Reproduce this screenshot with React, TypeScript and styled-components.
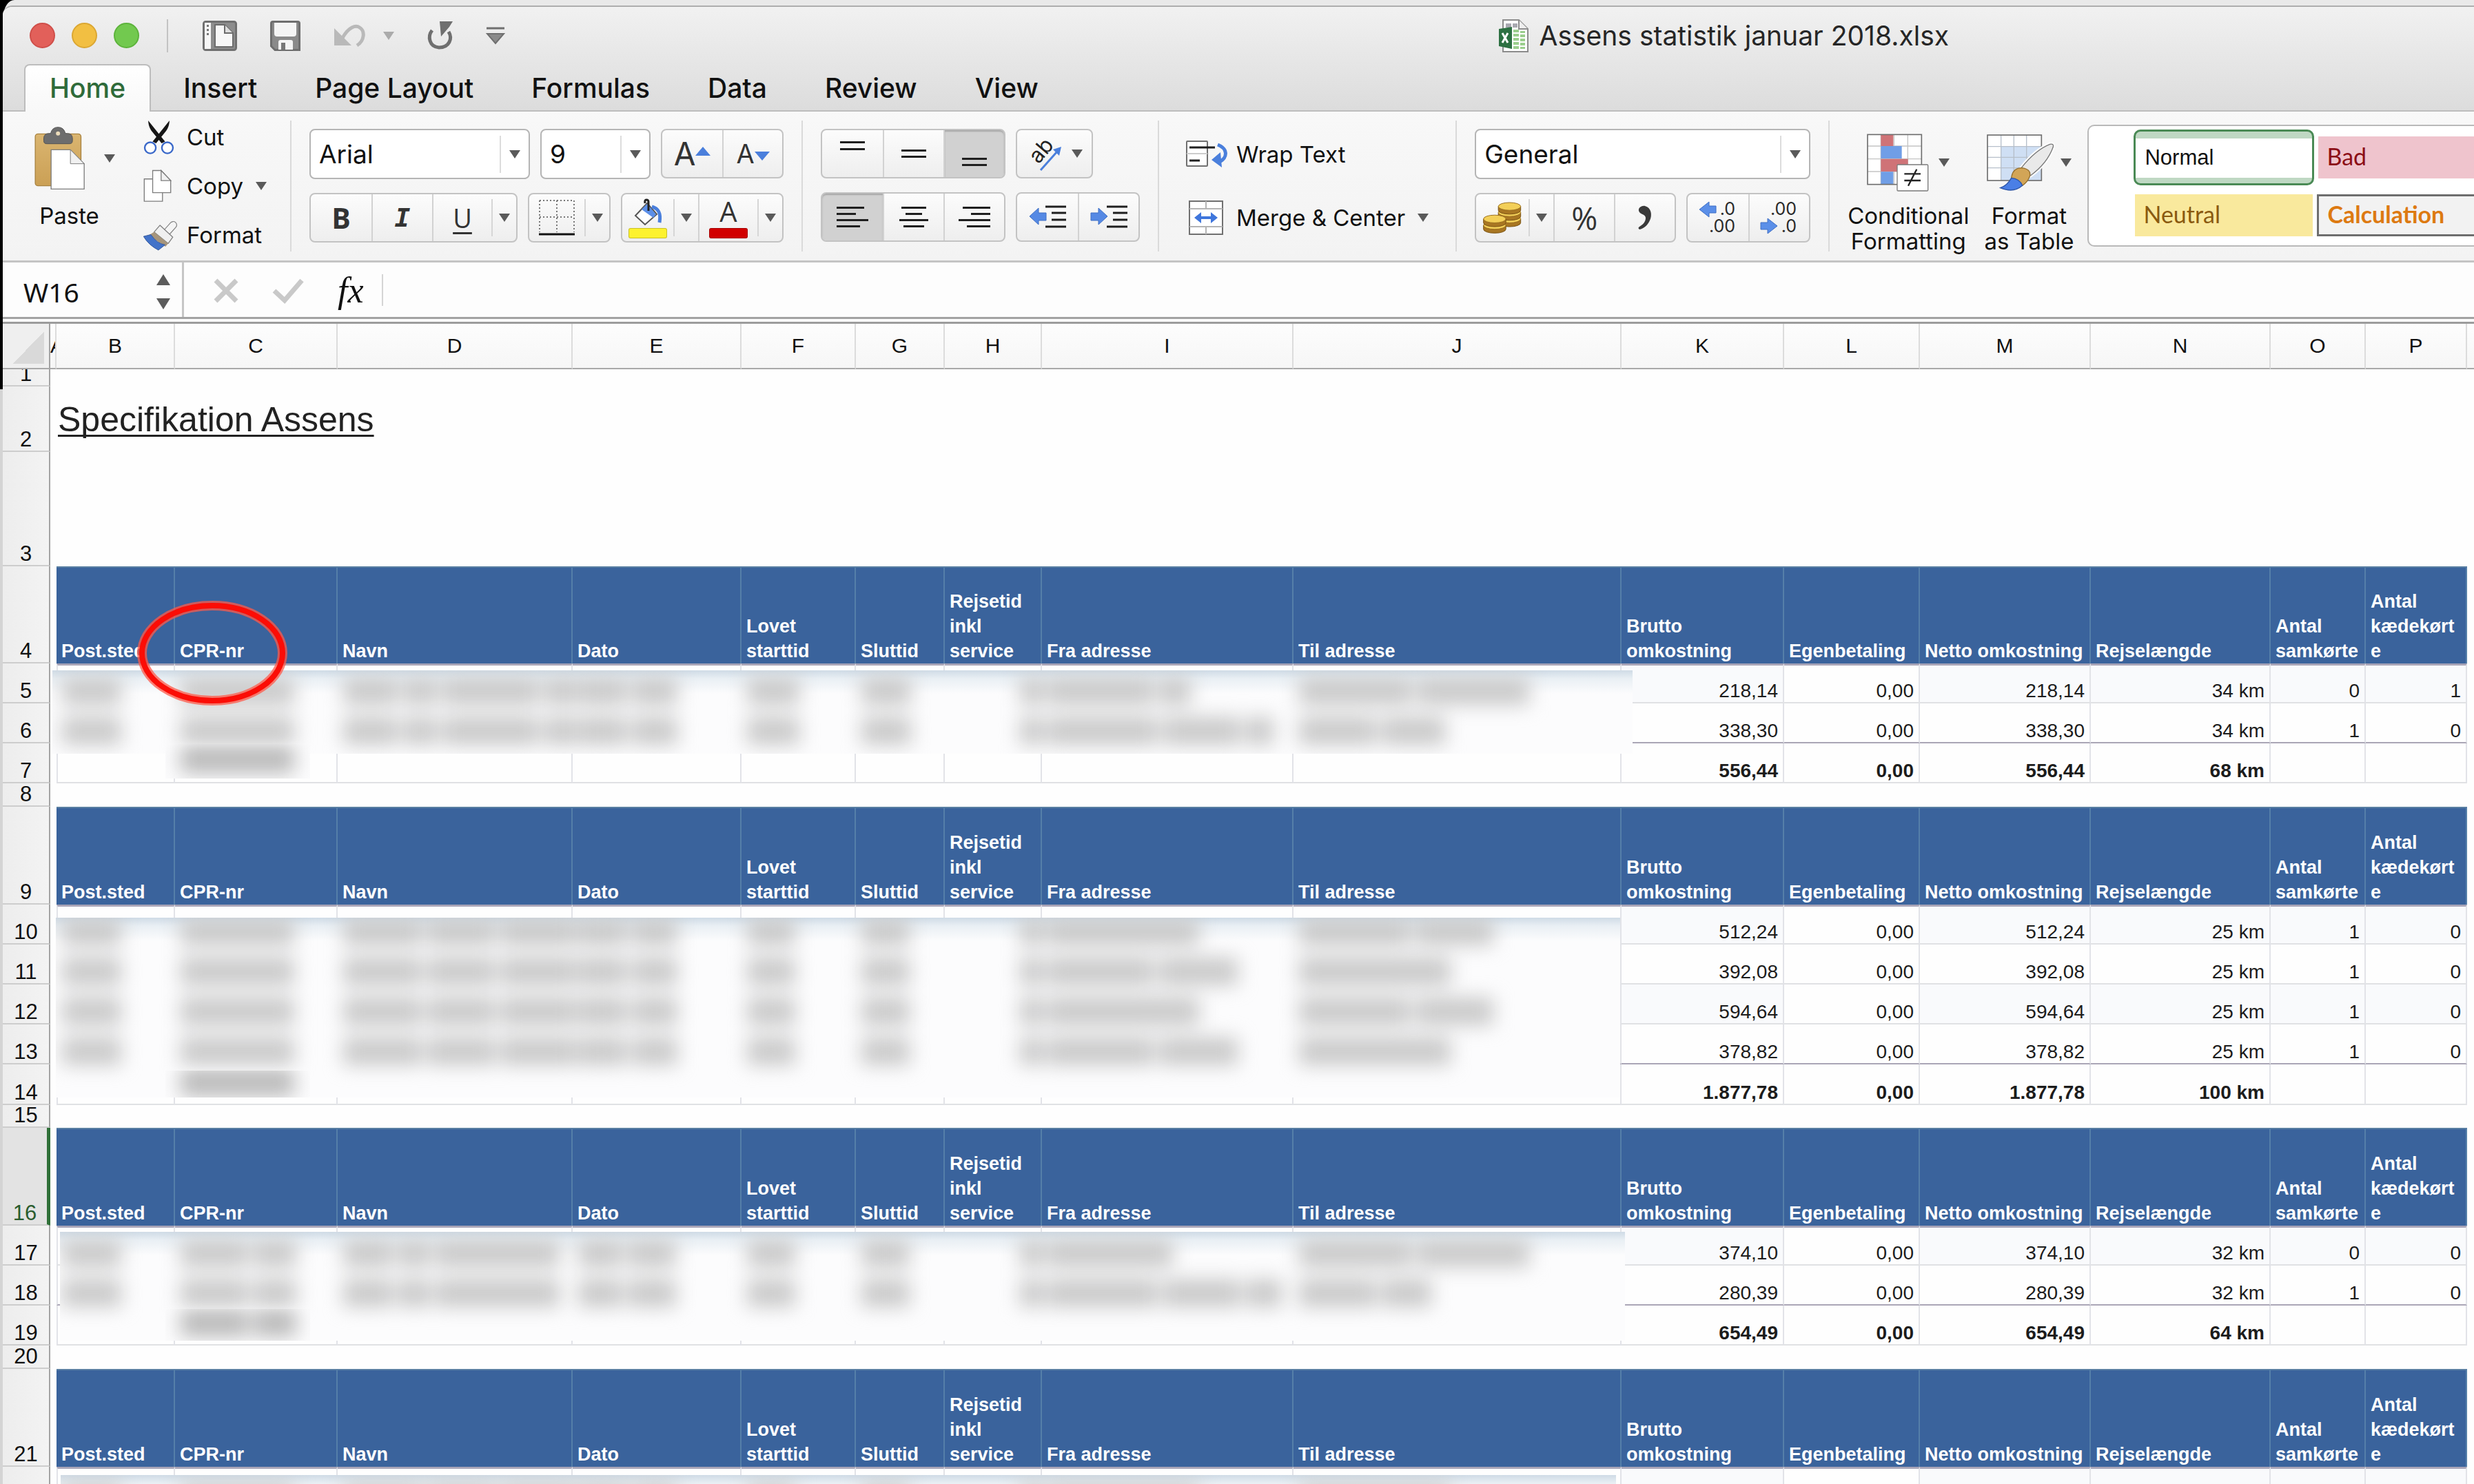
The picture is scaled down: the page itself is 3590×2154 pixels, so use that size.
import React from "react";
import styled, { createGlobalStyle, css } from "styled-components";

const UI = `Inter, "Liberation Sans", sans-serif`;
const SHEET = `"Liberation Sans", Arial, sans-serif`;
const CALIBRI = `Lato, "Open Sans", sans-serif`;
const HUMANIST = `"Open Sans", sans-serif`;

const GlobalStyle = createGlobalStyle`
  *, *::before, *::after { box-sizing: border-box; }
  html, body { margin: 0; padding: 0; }
  body { font-family: ${UI}; color: #111; }
  button, input, select { font: inherit; color: inherit; margin: 0; }
  svg { flex: none; overflow: visible; }
`;

/* ---------- window frame ---------- */

const Desktop = styled.div`
  height: 100vh;
  overflow: hidden;
  padding: 8px 0 0 4px;
  background: linear-gradient(#000 565px, #d4d4d4 565px);
  display: flex;
  flex-direction: column;
  position: relative;
  &::before {
    content: "";
    position: absolute;
    inset: 0 0 auto 5px;
    height: 40px;
    border-top-left-radius: 16px 24px;
    background: #e9e9e9;
  }
`;

const Window = styled.main`
  flex: 1;
  min-height: 0;
  display: flex;
  flex-direction: column;
  position: relative;
  background: #fdfdfd;
  border-top: 2px solid #aeaeae;
  border-top-left-radius: 14px;
  overflow: hidden;
`;

const Chrome = styled.header`
  background: linear-gradient(#f1f1f1, #dcdcdc);
  border-bottom: 2px solid #bdbdbd;
`;

const TitleBar = styled.div`
  display: flex;
  align-items: center;
  height: 83px;
`;

const TitleTools = styled.div`
  flex: 0 0 60.5%;
  display: flex;
  align-items: center;
  padding-left: 39px;
`;

const Lights = styled.div`
  display: flex;
  gap: 24px;
  padding-right: 40px;
  border-right: 2px solid #c3c3c3;
  height: 48px;
  align-items: center;
`;

const Light = styled.button<{ $fill: string; $edge: string }>`
  width: 37px;
  height: 37px;
  padding: 0;
  border-radius: 50%;
  border: 2px solid ${(p) => p.$edge};
  background: ${(p) => p.$fill};
`;

const BareButton = styled.button`
  display: flex;
  align-items: center;
  padding: 0;
  border: 0;
  background: none;
`;

const QuickTools = styled.div`
  display: flex;
  align-items: center;
  padding-left: 50px;
  gap: 48px;
`;

const DocTitle = styled.h1`
  display: flex;
  align-items: center;
  gap: 16px;
  margin: 0;
  font-size: 39px;
  font-weight: 400;
  color: #262626;
  white-space: nowrap;
`;

const Tabs = styled.nav`
  display: flex;
  gap: 10px;
  padding-left: 31px;
  height: 67px;
`;

const Tab = styled.button<{ $active?: boolean }>`
  padding: 0 35px;
  font-size: 39px;
  line-height: 60px;
  font-weight: 500;
  border: 2px solid transparent;
  border-bottom: 0;
  background: none;
  white-space: nowrap;
  ${(p) =>
    p.$active &&
    css`
      color: #2f6b3a;
      height: 69px;
      padding-bottom: 2px;
      background: linear-gradient(#fff, #f8f8f8);
      border-color: #bdbdbd;
      border-radius: 8px 8px 0 0;
    `}
`;

/* ---------- ribbon ---------- */

const Ribbon = styled.section`
  display: flex;
  padding: 13px 0;
  background: linear-gradient(#f8f8f8, #f3f3f3);
  border-bottom: 3px solid #c4c4c4;
  font-size: 33px;
`;

const RibbonGroup = styled.div<{ $pad?: number; $grow?: boolean }>`
  display: flex;
  flex: ${(p) => (p.$grow ? "1 0 0" : "none")};
  min-width: 0;
  height: 190px;
  padding: ${(p) => (p.$grow ? "0 0 0 26px" : `12px ${p.$pad ?? 26}px`)};
  border-right: ${(p) => (p.$grow ? "0" : "2px solid #dadada")};
`;

const Stack = styled.div<{ $gap: number }>`
  display: flex;
  flex-direction: column;
  gap: ${(p) => p.$gap}px;
`;

const Row = styled.div`
  display: flex;
  gap: 15px;
`;

const PasteButton = styled.button`
  display: flex;
  flex-direction: column;
  align-items: center;
  justify-content: space-between;
  height: 150px;
  padding: 0;
  margin: -5px 40px 0 0;
  border: 0;
  background: none;
  line-height: 38px;
`;

const PasteLabel = styled.span`
  padding-right: 14px;
`;

const WithArrow = styled.span<{ $gap: number }>`
  display: flex;
  align-items: center;
  gap: ${(p) => p.$gap}px;
`;

const ClipList = styled.div`
  display: flex;
  flex-direction: column;
  width: 170px;
  margin: -15px 0;
`;

const LabelButton = styled.button<{ $slot: number; $height: number }>`
  display: grid;
  grid-template-columns: ${(p) => p.$slot}px auto auto;
  justify-content: start;
  align-items: center;
  height: ${(p) => p.$height}px;
  padding: 0;
  border: 0;
  background: none;
  white-space: nowrap;
  line-height: 36px;
  & > :nth-child(3) { margin-left: 18px; }
`;

const Combo = styled.div<{ $width: number }>`
  display: flex;
  align-items: center;
  width: ${(p) => p.$width}px;
  height: 73px;
  border: 2px solid #b5b5b5;
  border-radius: 8px;
  background: #fff;
  select {
    flex: 1;
    min-width: 0;
    height: 100%;
    padding: 0 0 0 12px;
    border: 0;
    background: none;
    appearance: none;
    font-size: 37px;
  }
`;

const ArrowSlot = styled.span`
  display: flex;
  align-items: center;
  justify-content: center;
  width: 42px;
  height: 54px;
  border-left: 2px solid #dcdcdc;
`;

const Segments = styled.div`
  display: flex;
  height: 72px;
  border: 2px solid #c3c3c3;
  border-radius: 8px;
  background: linear-gradient(#fcfcfc, #eee);
  & > button + button:not([data-drop]) { border-left: 2px solid #d2d2d2; }
`;

const Segment = styled.button<{ $width?: number; $pressed?: boolean }>`
  display: flex;
  align-items: center;
  justify-content: center;
  width: ${(p) => p.$width ?? 88}px;
  padding: 0;
  border: 0;
  color: #333;
  background: ${(p) => (p.$pressed ? "#d1d1d1" : "none")};
  box-shadow: ${(p) => (p.$pressed ? "inset 0 2px 2px #a6a6a6" : "none")};
  &:first-child { border-radius: 6px 0 0 6px; }
  &:last-child { border-radius: 0 6px 6px 0; }
`;

const DropSegment = styled.button`
  align-self: center;
  display: flex;
  align-items: center;
  justify-content: center;
  width: 36px;
  height: 54px;
  padding: 0;
  border: 0;
  border-left: 2px solid #d6d6d6;
  background: none;
`;

const Glyph = styled.span<{ $font?: string; $size?: number; $bold?: boolean; $italic?: boolean; $line?: boolean; $tight?: boolean }>`
  font-family: ${(p) => p.$font ?? UI};
  font-size: ${(p) => p.$size ?? 38}px;
  line-height: ${(p) => (p.$tight ? 40 : 46)}px;
  font-weight: ${(p) => (p.$bold ? 700 : 400)};
  font-style: ${(p) => (p.$italic ? "italic" : "normal")};
  text-decoration: ${(p) => (p.$line ? "underline" : "none")};
  text-decoration-thickness: 3px;
  text-underline-offset: 6px;
`;

const Swatch = styled.span<{ $color: string }>`
  display: grid;
  justify-items: center;
  align-content: end;
  gap: 4px;
  height: 60px;
  &::after {
    content: "";
    width: 56px;
    height: 15px;
    border-radius: 3px;
    background: ${(p) => p.$color};
    box-shadow: inset 0 0 0 1px rgba(0, 0, 0, 0.2);
  }
`;

const BigButton = styled.button`
  display: flex;
  flex-direction: column;
  align-items: center;
  justify-content: flex-end;
  height: 194px;
  padding: 0;
  margin-right: 22px;
  border: 0;
  background: none;
  line-height: 37px;
  white-space: pre-line;
  & > :first-child { margin-bottom: 17px; }
`;

const StyleGallery = styled.div`
  flex: 1;
  min-width: 0;
  display: grid;
  grid-template-columns: 262px 300px;
  grid-template-rows: 81px 61px;
  gap: 13px 4px;
  align-items: center;
  height: 177px;
  margin: 6px 0 0 -2px;
  padding: 5px 0 0 65px;
  border: 2px solid #b9b9b9;
  border-right: 0;
  border-radius: 10px 0 0 10px;
  background: #fff;
  overflow: hidden;
`;

const CellStyle = styled.button<{ $bg: string; $ink: string; $bold?: boolean; $boxed?: boolean }>`
  height: 61px;
  margin: 0 ${(p) => (p.$boxed ? 0 : 2)}px 0 ${(p) => (p.$boxed ? 0 : 2)}px;
  padding: 0 0 4px 12px;
  text-align: left;
  font-family: ${CALIBRI};
  font-size: 34px;
  font-weight: ${(p) => (p.$bold ? 700 : 400)};
  color: ${(p) => p.$ink};
  background: ${(p) => p.$bg};
  border: ${(p) => (p.$boxed ? "3px solid #6e6e6e" : "0")};
`;

const SelectedStyle = styled.button`
  height: 81px;
  padding: 0 0 0 13px;
  text-align: left;
  font-family: ${SHEET};
  font-size: 31px;
  border: 3px solid #4a8a55;
  border-radius: 10px;
  background: linear-gradient(#bfd8c3 10px, #fff 10px, #fff 67px, #bfd8c3 67px);
`;

/* ---------- formula bar ---------- */

const FormulaBar = styled.section`
  display: flex;
  align-items: stretch;
  height: 82px;
  background: #fdfdfd;
  border-bottom: 3px solid #a3a3a3;
`;

const NameBox = styled.div`
  display: flex;
  align-items: center;
  width: 263px;
  padding: 6px 17px 0 30px;
  border-right: 3px solid #c6c6c6;
  input {
    flex: 1;
    min-width: 0;
    padding: 0;
    border: 0;
    background: none;
    font-family: "Noto Sans", sans-serif;
    font-size: 39px;
  }
`;

const FormulaTools = styled.div`
  display: flex;
  align-items: center;
  gap: 50px;
  padding: 2px 22px 0 43px;
  margin-right: 4px;
`;

const FormulaInput = styled.input`
  align-self: center;
  flex: 1;
  height: 46px;
  border: 0;
  border-left: 2px solid #d5d5d5;
  background: none;
  font-size: 36px;
`;

/* ---------- sheet ---------- */

const SheetArea = styled.section`
  flex: 1;
  min-height: 0;
  margin-top: 4px;
  border-top: 3px solid #9c9c9c;
  overflow: hidden;
  background: #fefefe;
`;

const Grid = styled.table`
  width: 100%;
  table-layout: fixed;
  border-collapse: separate;
  border-spacing: 0;
  font-family: ${SHEET};
  font-size: 28px;
  line-height: 32px;
  color: #1c1c1c;
  td, th { padding: 0; vertical-align: bottom; }
`;

const LetterRow = styled.thead`
  position: relative;
  z-index: 4;
`;

const Letter = styled.th<{ $narrow?: boolean }>`
  height: 66px;
  overflow: hidden;
  text-align: ${(p) => (p.$narrow ? "left" : "center")};
  font-weight: 400;
  font-size: 30px;
  line-height: 64px;
  color: #111;
  background: linear-gradient(#fdfdfd, #f6f6f6);
  border-right: 2px solid #dcdcdc;
  border-bottom: 2px solid #a9a9a9;
  &:last-child { border-right: 0; }
`;

const Corner = styled.td`
  background: linear-gradient(to bottom right, transparent 50%, #d9d9d9 50%) 14px 12px / 46px 46px no-repeat, #efefef;
  border-right: 2px solid #a3a3a3;
  border-bottom: 2px solid #a9a9a9;
`;

const RowNumber = styled.th<{ $active?: boolean }>`
  && { padding-bottom: 10px; }
  text-align: center;
  font-weight: 400;
  font-size: 31px;
  line-height: 12px;
  color: ${(p) => (p.$active ? "#2a5c2e" : "#111")};
  background: ${(p) =>
    p.$active ? "#e3e3e3" : "linear-gradient(to right, #ededed, #f3f3f3)"};
  border-right: ${(p) => (p.$active ? "5px solid #2f7038" : "2px solid #a3a3a3")};
  border-bottom: 2px solid #cdcdcd;
`;

const TitleCell = styled.td`
  && { padding: 0 0 19px 2px; }
  font-size: 50px;
  line-height: 56px;
  color: #222;
  text-decoration: underline;
  text-decoration-thickness: 3px;
  text-underline-offset: 5px;
  text-decoration-skip-ink: none;
`;

const HeadCell = styled.th`
  && { padding-left: 7px; }
  position: relative;
  text-align: left;
  white-space: pre;
  font-size: 27px;
  line-height: 36px;
  color: #fff;
  background: #3a639c;
  border-right: 2px solid #557fa9;
  border-top: 2px solid #5a7fa2;
`;

const DataCell = styled.td<{ $tint?: boolean; $first?: boolean; $last?: boolean; $total?: boolean; $edge?: boolean }>`
  && { padding-right: 7px; }
  position: relative;
  text-align: right;
  white-space: nowrap;
  font-weight: ${(p) => (p.$total ? 700 : 400)};
  background: ${(p) => (p.$tint ? "#f9fafc" : "transparent")};
  border-right: 2px solid #e2e3e8;
  border-left: ${(p) => (p.$edge ? "2px solid #e2e3e8" : "0")};
  border-top: ${(p) => (p.$first ? "3px solid #a9a5b8" : "0")};
  border-bottom: 2px solid ${(p) => (p.$last ? "#aaa6b6" : "#e0e1e4")};
`;

/* ---------- blurred personal data ---------- */

const Veil = styled.div<{ $x: number; $y: number; $w: number; $h: number }>`
  position: absolute;
  z-index: 2;
  left: ${(p) => p.$x}px;
  top: ${(p) => p.$y}px;
  width: ${(p) => p.$w}px;
  height: ${(p) => p.$h}px;
  display: flex;
  flex-direction: column;
  overflow: hidden;
  background: #fcfcfd;
`;

const VeilShade = styled.div`
  flex: none;
  height: 34px;
  margin-bottom: -34px;
  background: linear-gradient(#cfdbe6, #e9eff4 35%, rgba(252, 252, 253, 0));
`;

const SmudgeGrid = styled.div<{ $x: number; $y: number }>`
  flex: none;
  display: grid;
  grid-template-columns: 172px 236px 341px 245px 166px 129px 141px 365px 476px;
  grid-auto-rows: 58px;
  margin: ${(p) => p.$y}px 0 0 ${(p) => p.$x}px;
  filter: blur(14px);
`;

const SmudgeCell = styled.div<{ $end?: boolean }>`
  display: flex;
  align-items: center;
  justify-content: ${(p) => (p.$end ? "flex-end" : "flex-start")};
  gap: 8px;
  padding-left: ${(p) => (p.$end ? 0 : 6)}px;
`;

const Smudge = styled.span<{ $w: number; $dark?: boolean }>`
  flex: none;
  width: ${(p) => p.$w}px;
  height: 40px;
  background: ${(p) => (p.$dark ? "#b9b9b9" : "#c9c9c9")};
`;

const Ring = styled.svg`
  position: absolute;
  z-index: 3;
  left: -59px;
  top: 44px;
`;

/* ---------- drawings ---------- */

const Down = ({ light = false }: { light?: boolean }) => (
  <svg width="16" height="12" viewBox="0 0 16 12" aria-hidden="true">
    <path d="M0 0H16L8 12Z" fill={light ? "#ababab" : "#5a5a5a"} />
  </svg>
);

const SidebarIcon = () => (
  <svg width="50" height="44" viewBox="0 0 50 44">
    <rect x="1.5" y="1.5" width="47" height="41" rx="3" fill="#8d8d8d" stroke="#707070" strokeWidth="3" />
    <rect x="3" y="3" width="9" height="38" fill="#f7f7f7" />
    <path d="M7.500 6v3M7.500 12v3M7.500 18v3" stroke="#777" strokeWidth="3" />
    <path d="M18 6H32L44 18V38H18Z" fill="#f7f7f7" stroke="#6c6c6c" strokeWidth="2" />
    <path d="M32 6V18H44" fill="#ddd" stroke="#6c6c6c" strokeWidth="2" />
  </svg>
);

const SaveIcon = () => (
  <svg width="44" height="44" viewBox="0 0 44 44">
    <path d="M4 1.500H40Q42.500 1.500 42.500 4V42.500H7L1.500 37V4Q1.500 1.500 4 1.500Z" fill="#8a8a8a" stroke="#6e6e6e" strokeWidth="3" />
    <path d="M6 3H38V19Q38 23 34 23H10Q6 23 6 19Z" fill="#f4f4f4" />
    <path d="M12 42V31Q12 28 15 28H30Q33 28 33 31V42Z" fill="#f4f4f4" />
    <rect x="16" y="32" width="6" height="10" fill="#777" />
  </svg>
);

const UndoIcon = () => (
  <svg width="48" height="34" viewBox="0 0 48 34">
    <path d="M1 6V31H26Z" fill="#b9b9b9" />
    <path d="M13 20C22 4 32 1 38 5C46 10 45 24 34 31" fill="none" stroke="#b9b9b9" strokeWidth="5" />
  </svg>
);

const RepeatIcon = () => (
  <svg width="38" height="42" viewBox="0 0 38 42">
    <path d="M7 13C0 22 3 37 17 38C32 38 37 25 31 15" fill="none" stroke="#6f6f6f" strokeWidth="5" />
    <path d="M18 0H37L32 8L20 22Z" fill="#6f6f6f" />
  </svg>
);

const CustomizeIcon = () => (
  <svg width="26" height="26" viewBox="0 0 26 26">
    <path d="M0 2H26" stroke="#6f6f6f" strokeWidth="3" />
    <path d="M1 10H25L13 24Z" fill="#8a8a8a" stroke="#6f6f6f" strokeWidth="2" />
  </svg>
);

const ExcelIcon = () => (
  <svg width="44" height="48" viewBox="0 0 44 48">
    <path d="M7 1H30L43 14V47H7Z" fill="#fff" stroke="#8c8c8c" strokeWidth="2" />
    <path d="M30 1V14H43" fill="#eee" stroke="#8c8c8c" strokeWidth="2" />
    <path d="M11 6h8v6h-8zM21 6h7v6h-7z" fill="#a9a9b1" />
    <path d="M22 15h8v4h-8zM32 17h7v3h-7zM22 21h8v4h-8zM32 22h7v4h-7zM22 27h8v4h-8zM32 28h7v4h-7zM22 33h8v4h-8zM32 34h7v4h-7zM22 39h8v4h-8zM32 40h7v3h-7z" fill="#9bcf8d" />
    <path d="M1 14L20 11V43L1 39Z" fill="#2d7042" />
    <path d="M6 20L14 34M14 20L6 34" stroke="#fff" strokeWidth="3" />
  </svg>
);

const PasteIcon = () => (
  <svg width="77" height="95" viewBox="140 35 230 285">
    <defs>
      <linearGradient id="board" x1="0" x2="0" y1="0" y2="1">
        <stop offset="0" stopColor="#dab570" />
        <stop offset="1" stopColor="#cba055" />
      </linearGradient>
    </defs>
    <rect x="149" y="72" width="199" height="226" rx="12" fill="url(#board)" stroke="#a8823f" strokeWidth="4" />
    <path d="M186 102V92Q186 70 210 70H216Q222 43 248 43Q274 43 280 70H288Q311 70 311 92V102Q311 115 298 115H199Q186 115 186 102Z" fill="#6d6d6d" stroke="#555" strokeWidth="3" />
    <circle cx="248" cy="70" r="9" fill="#ecdcba" />
    <path d="M218 141H302L362 202V312H218Z" fill="#fff" stroke="#7d7d7d" strokeWidth="4" />
    <path d="M302 141V202H362Z" fill="#f1f1f1" stroke="#7d7d7d" strokeWidth="3" />
  </svg>
);

const CutIcon = () => (
  <svg width="47" height="52" viewBox="620 10 140 155">
    <path d="M644 16C645 38 652 54 662 65L702 114L717 107Z" fill="#161616" />
    <path d="M736 16C735 38 728 54 718 65L678 114L663 107Z" fill="#161616" />
    <circle cx="653" cy="134" r="24" fill="#fff" stroke="#3a68c9" strokeWidth="7" />
    <circle cx="727" cy="134" r="24" fill="#fff" stroke="#3a68c9" strokeWidth="7" />
  </svg>
);

const CopyIcon = () => (
  <svg width="43" height="50" viewBox="625 225 130 150">
    <path d="M632 269H712V367H632Z" fill="#fff" stroke="#7c7c7c" strokeWidth="4" />
    <path d="M669 232H706L748 276V329H669Z" fill="#fff" stroke="#7c7c7c" strokeWidth="4" />
    <path d="M706 232V276H748Z" fill="#f1f1f1" stroke="#7c7c7c" strokeWidth="4" />
  </svg>
);

const BrushIcon = () => (
  <svg width="53" height="47" viewBox="614 440 160 140">
    <path d="M748 465L722 494" stroke="#808080" strokeWidth="34" strokeLinecap="round" />
    <path d="M748 465L716 500" stroke="#f5f5f5" strokeWidth="27" strokeLinecap="round" />
    <path d="M690 466L746 518L726 546L664 496Z" fill="#f0f0f0" stroke="#808080" strokeWidth="4" strokeLinejoin="round" />
    <path d="M664 496L726 546L714 560L640 510Z" fill="#a6957c" />
    <path d="M618 515L650 507Q676 546 712 552L683 575Q640 553 618 515Z" fill="#4373c9" stroke="#34599c" strokeWidth="3" />
  </svg>
);

const BordersIcon = () => (
  <svg width="52" height="54" viewBox="0 0 52 54">
    <path d="M1 2H51M1 26H51M1 2V48M26 2V48M51 2V48" stroke="#777" strokeWidth="2" strokeDasharray="2 3" fill="none" />
    <path d="M0 51H52" stroke="#111" strokeWidth="3" />
  </svg>
);

const BucketIcon = () => (
  <svg width="42" height="38" viewBox="0 0 42 38">
    <path d="M3 24L20 6L34 22L17 37Z" fill="#fff" stroke="#555" strokeWidth="2" />
    <path d="M12 15L20 7L33 22L29 27Z" fill="#5c8fe8" />
    <path d="M27 11C38 14 40 22 38 34" fill="none" stroke="#4a7fdc" strokeWidth="5" />
    <path d="M22 17V4Q22 1 19 1Q16 1 17 6" fill="none" stroke="#222" strokeWidth="3" />
  </svg>
);

const Lines = ({ rows, width = 46, height = 38 }: { rows: number[][]; width?: number; height?: number }) => (
  <svg width={width} height={height} viewBox={`0 0 ${width} ${height}`}>
    {rows.map(([x, y, w]) => (
      <rect key={y} x={x} y={y} width={w} height="3" fill="#1f1f1f" />
    ))}
  </svg>
);

const OrientIcon = () => (
  <svg width="52" height="50" viewBox="0 0 52 50">
    <text x="18" y="41" transform="rotate(-50 18 41)" fontFamily="Inter, sans-serif" fontSize="31" fill="#222">ab</text>
    <path d="M21 49L45 22" stroke="#4a7fdc" strokeWidth="3" />
    <path d="M39 19L51 15L48 28Z" fill="#4a7fdc" />
  </svg>
);

const IndentIcon = ({ out = false }: { out?: boolean }) => (
  <svg width="54" height="34" viewBox="0 0 54 34">
    <path d={out ? "M1 16L14 4V11H25V22H14V28Z" : "M25 16L12 4V11H1V22H12V28Z"} fill="#5589e4" stroke="#3f6fc4" />
    <path d="M24 2H54M33 11H54M33 21H54M24 31H54" stroke="#1f1f1f" strokeWidth="3" />
  </svg>
);

const WrapIcon = () => (
  <svg width="62" height="40" viewBox="0 0 62 40">
    <rect x="1" y="1" width="30" height="36" rx="1" fill="#fff" stroke="#707070" strokeWidth="2" />
    <path d="M1 19H31" stroke="#ccc" strokeWidth="2" />
    <path d="M5 10H42M5 29H20" stroke="#1f1f1f" strokeWidth="3" />
    <path d="M46 6C61 12 60 24 50 30" fill="none" stroke="#4a7fdc" strokeWidth="5" />
    <path d="M37 28L50 17L52 39Z" fill="#4a7fdc" />
  </svg>
);

const MergeIcon = () => (
  <svg width="54" height="50" viewBox="-4 0 54 50">
    <rect x="1" y="1" width="48" height="48" fill="#fff" stroke="#707070" strokeWidth="2" />
    <path d="M1 12H49M1 38H49M25 1V12M25 38V49" stroke="#b5b5b5" strokeWidth="2" />
    <path d="M14 25H36" stroke="#3f76dc" strokeWidth="4" />
    <path d="M8 25L18 17V33ZM42 25L32 17V33Z" fill="#3f76dc" />
  </svg>
);

const Coin = ({ x, y }: { x: number; y: number }) => (
  <g>
    <path d={`M${x} ${y}V${y + 17}A49 17 0 0 0 ${x + 98} ${y + 17}V${y}Z`} fill="#a87622" stroke="#7b5413" strokeWidth="3" />
    <ellipse cx={x + 49} cy={y} rx="49" ry="17" fill="#f3cf58" stroke="#9a6f1f" strokeWidth="3" />
  </g>
);

const CoinsIcon = () => (
  <svg width="58" height="48" viewBox="80 340 175 145">
    <Coin x={150} y={418} />
    <Coin x={150} y={390} />
    <Coin x={150} y={363} />
    <Coin x={85} y={446} />
    <Coin x={85} y={418} />
  </svg>
);

const CommaIcon = () => (
  <svg width="22" height="36" viewBox="0 0 22 36">
    <path d="M2 8C1 3 7 0 11 1C20 3 22 14 18 22C15 29 9 34 3 35C1 34 1 32 3 31C8 28 12 24 12 18C11 12 4 14 2 8Z" fill="#3a3a3a" />
  </svg>
);

const DecimalIcon = ({ more = false }: { more?: boolean }) => (
  <svg width="52" height="48" viewBox="0 0 52 48" fontFamily="Inter, sans-serif" fontSize="25" fill="#2a2a2a" textAnchor="end">
    <text x="51" y="20">{more ? ".0" : ".00"}</text>
    <text x="51" y="45">{more ? ".00" : ".0"}</text>
    {more ? (
      <path d="M-1 12L13 1V7H23V17H13V23Z" fill="#5b8fe8" stroke="#3f6fc4" />
    ) : (
      <path d="M23 36L9 25V31H-1V41H9V47Z" fill="#5b8fe8" stroke="#3f6fc4" />
    )}
  </svg>
);

const ConditionalIcon = () => (
  <svg width="90" height="84" viewBox="62 42 270 252">
    <rect x="65" y="46" width="235" height="217" fill="#fff" />
    <path d="M123 46V263M180 46V263M240 46V263M65 96H300M65 152H300M65 207H300" stroke="#c3c3c3" strokeWidth="4" />
    <path d="M123 48H177V96H123ZM123 152H241V207H123Z" fill="#cf7377" />
    <path d="M123 96H214V150H123ZM123 208H177V262H123Z" fill="#709ee6" />
    <rect x="65" y="46" width="235" height="217" fill="none" stroke="#6f6f6f" strokeWidth="5" />
    <rect x="194" y="177" width="134" height="114" rx="4" fill="#fff" stroke="#7a7a7a" strokeWidth="4" />
    <path d="M225 217H296M225 246H296M279 197L242 269" stroke="#222" strokeWidth="7" />
  </svg>
);

const FormatTableIcon = () => (
  <svg width="99" height="84" viewBox="587 50 297 252">
    <rect x="590" y="56" width="235" height="198" fill="#fff" />
    <path d="M649 106H825V254H649Z" fill="#cfdff4" />
    <path d="M649 56V254M705 56V254M760 56V254M590 106H825M590 153H825M590 199H825" stroke="#b6bfca" strokeWidth="4" />
    <rect x="590" y="56" width="235" height="198" fill="none" stroke="#6f6f6f" strokeWidth="5" />
    <path d="M738 198Q800 120 862 96Q880 92 876 108Q850 180 778 232Z" fill="#e9e9e9" stroke="#fff" strokeWidth="16" />
    <path d="M738 198Q800 120 862 96Q880 92 876 108Q850 180 778 232Z" fill="#e9e9e9" stroke="#777" strokeWidth="4" />
    <path d="M694 244Q698 200 738 199Q782 204 774 236Q764 262 742 276Z" fill="#d2a557" stroke="#95702f" strokeWidth="4" />
    <path d="M646 286Q676 276 694 243Q730 246 742 276Q704 310 646 286Z" fill="#4a7fe6" stroke="#2d56a8" strokeWidth="4" />
  </svg>
);

const Steppers = () => (
  <svg width="20" height="52" viewBox="0 0 20 52">
    <path d="M0 16L10 0L20 16ZM0 35H20L10 51Z" fill="#5c5c5c" />
  </svg>
);

/* ---------- data ---------- */

const COLUMNS: [string, number][] = [
  ["A", 9], ["B", 172], ["C", 236], ["D", 341], ["E", 245], ["F", 166], ["G", 129], ["H", 141],
  ["I", 365], ["J", 476], ["K", 236], ["L", 197], ["M", 248], ["N", 261], ["O", 138], ["P", 147],
];

const HEADINGS = [
  "Post.sted", "CPR-nr", "Navn", "Dato", "Lovet\nstarttid", "Sluttid", "Rejsetid\ninkl\nservice",
  "Fra adresse", "Til adresse", "Brutto\nomkostning", "Egenbetaling", "Netto omkostning",
  "Rejselængde", "Antal\nsamkørte", "Antal\nkædekørt\ne",
];

type Blur = { x: number; y: number; w: number; h: number; top: number; rows: number[][][] };

type Block = {
  head: number;
  rows: string[][];
  total?: string[];
  gap?: number;
  blurs: Blur[];
};

const BLOCKS: Block[] = [
  {
    head: 4,
    rows: [
      ["218,14", "0,00", "218,14", "34 km", "0", "1"],
      ["338,30", "0,00", "338,30", "34 km", "1", "0"],
    ],
    total: ["556,44", "0,00", "556,44", "68 km", "", ""],
    gap: 34,
    blurs: [
      {
        x: -8, y: 7, w: 2293, h: 121, top: 1,
        rows: [
          [[86], [165], [80, 48, 140, 46], [70, 66], [76], [72], [34], [154, 46], [164, 162]],
          [[86], [165], [80, 48, 140, 46], [70, 66], [76], [72], [34], [160, 112, 40], [112, 92]],
        ],
      },
      { x: 156, y: 114, w: 210, h: 50, top: -7, rows: [[[], [165]]] },
    ],
  },
  {
    head: 9,
    rows: [
      ["512,24", "0,00", "512,24", "25 km", "1", "0"],
      ["392,08", "0,00", "392,08", "25 km", "1", "0"],
      ["594,64", "0,00", "594,64", "25 km", "1", "0"],
      ["378,82", "0,00", "378,82", "25 km", "1", "0"],
    ],
    total: ["1.877,78", "0,00", "1.877,78", "100 km", "", ""],
    gap: 33,
    blurs: [
      {
        x: -3, y: 16, w: 2270, h: 261, top: -9,
        rows: [
          [[86], [165], [114, 98, 110], [70, 66], [70], [70], [34], [220], [162, 112]],
          [[86], [165], [114, 98, 110], [70, 66], [70], [70], [34], [154, 114], [220]],
          [[86], [165], [114, 98, 110], [70, 66], [70], [70], [34], [220], [162, 112]],
          [[86], [165], [114, 98, 110], [70, 66], [70], [70], [34], [154, 114], [220]],
        ],
      },
      { x: 156, y: 238, w: 210, h: 39, top: -12, rows: [[[], [165]]] },
    ],
  },
  {
    head: 16,
    rows: [
      ["374,10", "0,00", "374,10", "32 km", "0", "0"],
      ["280,39", "0,00", "280,39", "32 km", "1", "0"],
    ],
    total: ["654,49", "0,00", "654,49", "64 km", "", ""],
    gap: 34,
    blurs: [
      {
        x: 3, y: 6, w: 2271, h: 158, top: 2,
        rows: [
          [[86], [98, 62], [72, 46, 180], [64, 70], [70], [70], [34], [182], [164, 162]],
          [[86], [98, 62], [72, 46, 180], [64, 70], [70], [70], [34], [160, 112, 52], [112, 72]],
        ],
      },
      { x: 156, y: 118, w: 210, h: 46, top: -9, rows: [[[], [98, 62]]] },
    ],
  },
  {
    head: 21,
    rows: [["", "", "", "", "", ""]],
    blurs: [
      { x: 4, y: 9, w: 2257, h: 60, top: 3, rows: [[[86], [165], [114, 98, 110], [70, 66], [70], [70], [34], [220], [220]]] },
    ],
  },
];

const TABS = ["Home", "Insert", "Page Layout", "Formulas", "Data", "Review", "View"];

/* ---------- pieces ---------- */

const Drop = ({ label }: { label: string }) => (
  <DropSegment data-drop aria-label={label}>
    <Down />
  </DropSegment>
);

const Picker = ({ label, value, width }: { label: string; value: string; width: number }) => (
  <Combo $width={width}>
    <select aria-label={label} defaultValue={value}>
      <option>{value}</option>
    </select>
    <ArrowSlot>
      <Down />
    </ArrowSlot>
  </Combo>
);

const BlurPatch = ({ blur, shaded }: { blur: Blur; shaded: boolean }) => (
  <Veil $x={blur.x} $y={blur.y} $w={blur.w} $h={blur.h}>
    {shaded && <VeilShade />}
    <SmudgeGrid $x={-blur.x} $y={blur.top}>
      {blur.rows.flatMap((row, r) =>
        row.map((widths, c) => (
          <SmudgeCell key={`${r}-${c}`} $end={c === 6}>
            {widths.map((w, i) => (
              <Smudge key={i} $w={w} $dark={!shaded} />
            ))}
          </SmudgeCell>
        ))
      )}
    </SmudgeGrid>
  </Veil>
);

const DataRow = ({ number, values, index, count, total, blurs }: {
  number: number; values: string[]; index: number; count: number; total?: boolean; blurs?: Blur[];
}) => (
  <tr style={{ height: number === 14 ? 59 : 58 }}>
    <RowNumber scope="row">{number}</RowNumber>
    <td />
    {Array.from({ length: 9 }, (_, c) => (
      <DataCell key={c} $edge={c === 0} $first={index === 0} $last={index === count - 1}>
        {c === 0 && blurs?.map((b, i) => <BlurPatch key={i} blur={b} shaded={i === 0} />)}
      </DataCell>
    ))}
    {values.map((v, c) => (
      <DataCell key={c} $tint={!total && index % 2 === 0 && c !== 1} $total={total} $first={index === 0} $last={index === count - 1}>
        {v}
      </DataCell>
    ))}
    <td />
  </tr>
);

const BlockRows = ({ block }: { block: Block }) => (
  <tbody>
    <tr style={{ height: block.head === 4 ? 141 : 142 }}>
      <RowNumber scope="row" $active={block.head === 16}>{block.head}</RowNumber>
      <td />
      {HEADINGS.map((h, c) => (
        <HeadCell key={c} scope="col">
          {h}
          {block.head === 4 && c === 1 && (
            <Ring width="226" height="160" viewBox="0 0 226 160" aria-hidden="true">
              <ellipse cx="113" cy="80" rx="102" ry="69" fill="none" stroke="#ff5a4a" strokeOpacity="0.75" strokeWidth="14" />
              <ellipse cx="113" cy="80" rx="102" ry="69" fill="none" stroke="#fb0d06" strokeWidth="8" />
            </Ring>
          )}
        </HeadCell>
      ))}
      <td />
    </tr>
    {block.rows.map((values, i) => (
      <DataRow
        key={i}
        number={block.head + 1 + i}
        values={values}
        index={i}
        count={block.rows.length}
        blurs={i === 0 ? block.blurs : undefined}
      />
    ))}
    {block.total && (
      <DataRow number={block.head + 1 + block.rows.length} values={block.total} index={-1} count={9} total />
    )}
    {block.gap && (
      <tr style={{ height: block.gap }}>
        <RowNumber scope="row">{block.head + 2 + block.rows.length}</RowNumber>
        <td colSpan={17} />
      </tr>
    )}
  </tbody>
);

export default function App() {
  return (
    <Desktop>
      <GlobalStyle />
      <Window>
        <Chrome>
          <TitleBar>
            <TitleTools>
              <Lights>
                <Light $fill="#e2605a" $edge="#cf4f4a" aria-label="Close" />
                <Light $fill="#f2bf42" $edge="#dba733" aria-label="Minimize" />
                <Light $fill="#72c94f" $edge="#5db33c" aria-label="Zoom" />
              </Lights>
              <QuickTools>
                <BareButton aria-label="Gallery"><SidebarIcon /></BareButton>
                <BareButton aria-label="Save"><SaveIcon /></BareButton>
                <BareButton aria-label="Undo">
                  <WithArrow $gap={24}><UndoIcon /><Down light /></WithArrow>
                </BareButton>
                <BareButton aria-label="Repeat"><RepeatIcon /></BareButton>
                <BareButton aria-label="Customize toolbar"><CustomizeIcon /></BareButton>
              </QuickTools>
            </TitleTools>
            <DocTitle><ExcelIcon />Assens statistik januar 2018.xlsx</DocTitle>
          </TitleBar>
          <Tabs>
            {TABS.map((t, i) => (
              <Tab key={t} $active={i === 0}>{t}</Tab>
            ))}
          </Tabs>
        </Chrome>

        <Ribbon>
          <RibbonGroup $pad={44}>
            <PasteButton>
              <WithArrow $gap={26}><PasteIcon /><Down /></WithArrow>
              <PasteLabel>Paste</PasteLabel>
            </PasteButton>
            <ClipList>
              <LabelButton $slot={64} $height={54}><CutIcon /><span>Cut</span></LabelButton>
              <LabelButton $slot={64} $height={88}><CopyIcon /><span>Copy</span><Down /></LabelButton>
              <LabelButton $slot={64} $height={54}><BrushIcon /><span>Format</span></LabelButton>
            </ClipList>
          </RibbonGroup>

          <RibbonGroup>
            <Stack $gap={20}>
              <Row>
                <Picker label="Font" value="Arial" width={320} />
                <Picker label="Font size" value="9" width={160} />
                <Segments>
                  <Segment $width={87} aria-label="Increase font size">
                    <Glyph $size={46}>A</Glyph>
                    <svg width="22" height="30" viewBox="0 0 22 30"><path d="M0 18L11 5L22 18Z" fill="#4a7fdc" /></svg>
                  </Segment>
                  <Segment $width={87} aria-label="Decrease font size">
                    <Glyph $size={38}>A</Glyph>
                    <svg width="22" height="30" viewBox="0 0 22 30"><path d="M0 12H22L11 25Z" fill="#4a7fdc" /></svg>
                  </Segment>
                </Segments>
              </Row>
              <Row>
                <Segments>
                  <Segment aria-label="Bold"><Glyph $font={HUMANIST} $size={41} $bold>B</Glyph></Segment>
                  <Segment aria-label="Italic"><Glyph $font={`"DejaVu Sans Mono", monospace`} $bold $italic>I</Glyph></Segment>
                  <Segment $width={86} aria-label="Underline"><Glyph $font={HUMANIST} $size={38} $line>U</Glyph></Segment>
                  <Drop label="Underline options" />
                </Segments>
                <Segments>
                  <Segment $width={80} aria-label="Borders"><BordersIcon /></Segment>
                  <Drop label="Border options" />
                </Segments>
                <Segments>
                  <Segment $width={74} aria-label="Fill color"><Swatch $color="#fdf22f"><BucketIcon /></Swatch></Segment>
                  <Drop label="Fill colors" />
                  <Segment $width={86} aria-label="Font color"><Swatch $color="#d10000"><Glyph $font={HUMANIST} $size={40} $tight>A</Glyph></Swatch></Segment>
                  <Drop label="Font colors" />
                </Segments>
              </Row>
            </Stack>
          </RibbonGroup>

          <RibbonGroup>
            <Stack $gap={20}>
              <Row>
                <Segments>
                  <Segment aria-label="Top align"><Lines rows={[[5, 1, 36], [5, 11, 36]]} /></Segment>
                  <Segment aria-label="Middle align"><Lines rows={[[5, 13, 36], [5, 22, 36]]} /></Segment>
                  <Segment $pressed aria-label="Bottom align"><Lines rows={[[5, 25, 36], [5, 34, 36]]} /></Segment>
                </Segments>
                <Segments>
                  <Segment $width={108} aria-label="Orientation"><WithArrow $gap={14}><OrientIcon /><Down /></WithArrow></Segment>
                </Segments>
              </Row>
              <Row>
                <Segments>
                  <Segment $pressed aria-label="Align left"><Lines rows={[[0, 4, 40], [0, 13, 28], [0, 22, 46], [0, 31, 34]]} /></Segment>
                  <Segment aria-label="Center"><Lines rows={[[5, 4, 36], [11, 13, 24], [2, 22, 42], [8, 31, 30]]} /></Segment>
                  <Segment aria-label="Align right"><Lines rows={[[6, 4, 40], [18, 13, 28], [0, 22, 46], [12, 31, 34]]} /></Segment>
                </Segments>
                <Segments>
                  <Segment aria-label="Decrease indent"><IndentIcon out /></Segment>
                  <Segment aria-label="Increase indent"><IndentIcon /></Segment>
                </Segments>
              </Row>
            </Stack>
          </RibbonGroup>

          <RibbonGroup $pad={39}>
            <Stack $gap={20}>
              <LabelButton $slot={73} $height={73}><WrapIcon /><span>Wrap Text</span></LabelButton>
              <LabelButton $slot={73} $height={72}><MergeIcon /><span>Merge &amp; Center</span><Down /></LabelButton>
            </Stack>
          </RibbonGroup>

          <RibbonGroup>
            <Stack $gap={20}>
              <Picker label="Number format" value="General" width={487} />
              <Row>
                <Segments>
                  <Segment $width={76} aria-label="Currency"><CoinsIcon /></Segment>
                  <Drop label="Currency options" />
                  <Segment aria-label="Percent"><Glyph $font={HUMANIST} $size={46}>%</Glyph></Segment>
                  <Segment aria-label="Comma style"><CommaIcon /></Segment>
                </Segments>
                <Segments>
                  <Segment aria-label="Increase decimal"><DecimalIcon more /></Segment>
                  <Segment aria-label="Decrease decimal"><DecimalIcon /></Segment>
                </Segments>
              </Row>
            </Stack>
          </RibbonGroup>

          <RibbonGroup $grow>
            <BigButton>
              <WithArrow $gap={14}><ConditionalIcon /><Down /></WithArrow>
              <span>{"Conditional\nFormatting"}</span>
            </BigButton>
            <BigButton>
              <WithArrow $gap={8}><FormatTableIcon /><Down /></WithArrow>
              <span>{"Format\nas Table"}</span>
            </BigButton>
            <StyleGallery>
              <SelectedStyle>Normal</SelectedStyle>
              <CellStyle $bg="#efc4cd" $ink="#8c0e16">Bad</CellStyle>
              <CellStyle $bg="#f9e99d" $ink="#8a5a10">Neutral</CellStyle>
              <CellStyle $bg="#f2f2f2" $ink="#dd7a12" $bold $boxed>Calculation</CellStyle>
            </StyleGallery>
          </RibbonGroup>
        </Ribbon>

        <FormulaBar>
          <NameBox>
            <input aria-label="Name box" defaultValue="W16" />
            <Steppers />
          </NameBox>
          <FormulaTools>
            <BareButton aria-label="Cancel">
              <svg width="36" height="36" viewBox="0 0 36 36"><path d="M3 3L33 33M33 3L3 33" stroke="#c9c9c9" strokeWidth="7" /></svg>
            </BareButton>
            <BareButton aria-label="Enter">
              <svg width="44" height="36" viewBox="0 0 44 36"><path d="M2 18L17 32L42 3" fill="none" stroke="#c9c9c9" strokeWidth="7" /></svg>
            </BareButton>
            <BareButton aria-label="Insert function">
              <Glyph $font={`"Liberation Serif", serif`} $size={52} $italic>fx</Glyph>
            </BareButton>
          </FormulaTools>
          <FormulaInput aria-label="Formula" />
        </FormulaBar>

        <SheetArea>
          <Grid>
            <colgroup>
              <col style={{ width: 69 }} />
              {COLUMNS.map(([name, width]) => (
                <col key={name} style={{ width }} />
              ))}
              <col />
            </colgroup>
            <LetterRow>
              <tr>
                <Corner />
                {COLUMNS.map(([name]) => (
                  <Letter key={name} scope="col" $narrow={name === "A"}>{name}</Letter>
                ))}
                <Letter as="td" />
              </tr>
            </LetterRow>
            <tbody>
              <tr style={{ height: 25 }}>
                <RowNumber scope="row">1</RowNumber>
                <td colSpan={17} />
              </tr>
              <tr style={{ height: 95 }}>
                <RowNumber scope="row">2</RowNumber>
                <td />
                <TitleCell colSpan={16}>Specifikation Assens</TitleCell>
              </tr>
              <tr style={{ height: 166 }}>
                <RowNumber scope="row">3</RowNumber>
                <td colSpan={17} />
              </tr>
            </tbody>
            {BLOCKS.map((block) => (
              <BlockRows key={block.head} block={block} />
            ))}
          </Grid>
        </SheetArea>
      </Window>
    </Desktop>
  );
}
